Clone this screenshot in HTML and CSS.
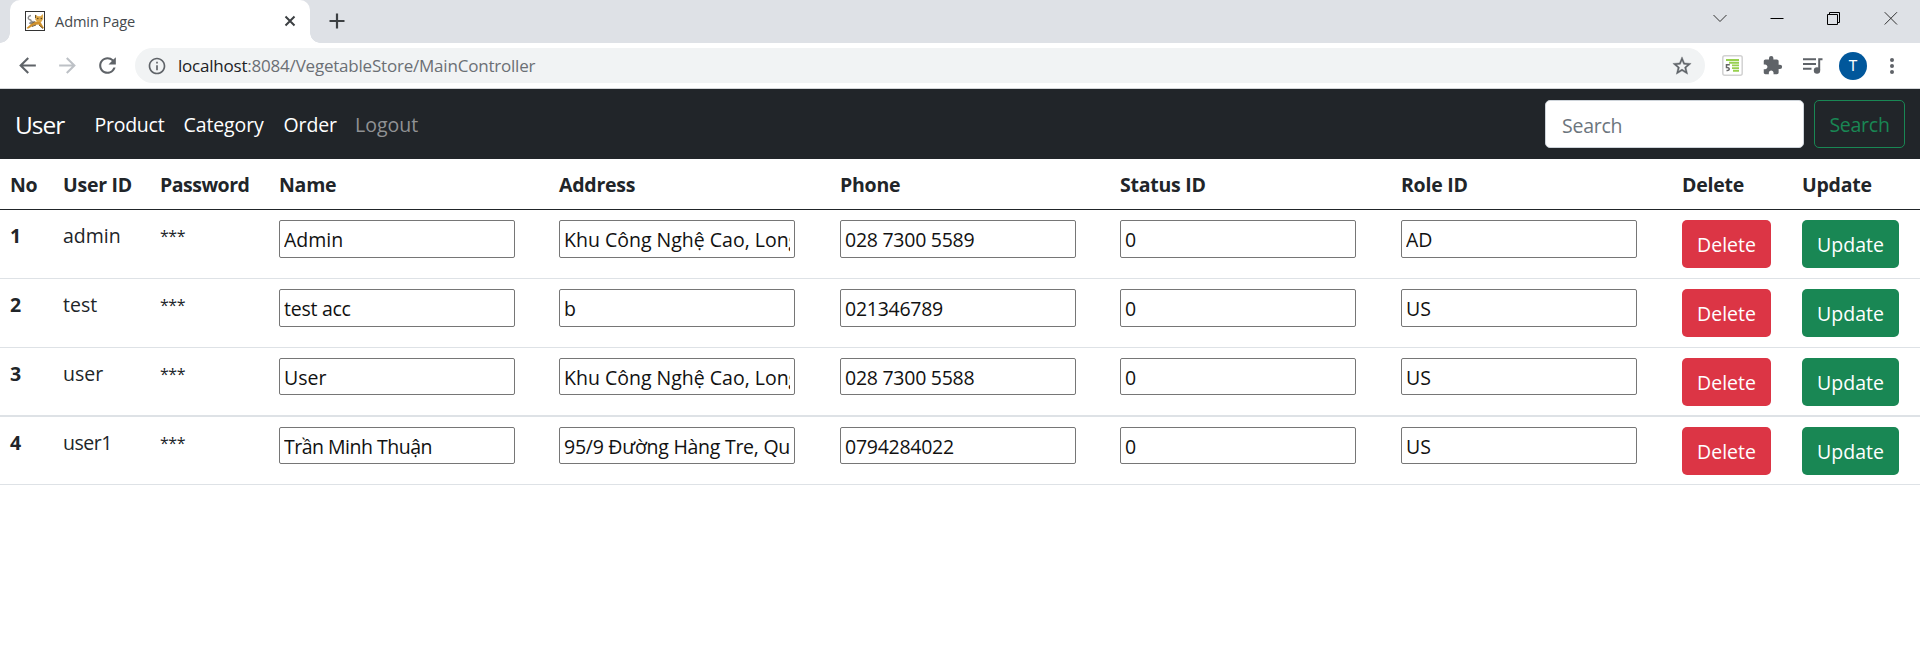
FILE: index.html
```
<!DOCTYPE html>
<html lang="vi">
<head>
<meta charset="utf-8">
<title>Admin Page</title>
<link rel="stylesheet" href="styles.css">
</head>
<body>
<header class="browser">
  <div class="tabstrip">
    <div class="tab">
      <svg class="favicon" width="20" height="20" viewBox="0 0 20 20">
        <rect x=".5" y=".5" width="19" height="19" fill="#fff" stroke="#333"/>
        <path d="M6 4.500C2.800 5 2.500 8 4.500 8.500S7.500 11 4 12.500M5 13l3.500-3" fill="none" stroke="#8d8d8d" stroke-width="1.300"/>
        <path d="M1.500 17l4.500-4 4.500-2.500 5 .5 3.500 6-1.500.5-4-4-4 .5-3.500 2L3 17.800z" fill="#d0912c"/>
        <path d="M10.500 3.500l2.300 1.800h2.700l2.500-2.300.2 5-2 3h-4l-2-2.500z" fill="#dda849"/>
        <path d="M6.500 12.500l3.500-2M10.500 4v3M14 14l4 3.500M7 15.500l4-1.500" stroke="#4a381d" stroke-width=".8"/>
        <circle cx="12.800" cy="7.500" r=".7" fill="#55431f"/><circle cx="16.300" cy="7.500" r=".7" fill="#55431f"/>
      </svg>
      <span class="tab-title">Admin Page</span>
      <svg class="tab-close" width="12" height="12" viewBox="0 0 12 12"><path d="M1.500 1.500l9 9M10.500 1.500l-9 9" stroke="#3c4043" stroke-width="2"/></svg>
    </div>
    <svg class="new-tab" width="16" height="16" viewBox="0 0 16 16"><path d="M8 .5v15M.5 8h15" stroke="#3c4043" stroke-width="2.200"/></svg>
    <div class="window-buttons">
      <svg width="14" height="14" viewBox="0 0 14 14"><path d="M.5 4L7 10.500 13.500 4" fill="none" stroke="#333" stroke-width="1"/></svg>
      <svg width="14" height="14" viewBox="0 0 14 14"><path d="M.5 7.500h13" stroke="#000"/></svg>
      <svg width="14" height="14" viewBox="0 0 14 14"><path d="M.5 3.500h10v10H.5zM2.500 3.500v-2h10v10h-2" fill="none" stroke="#000" stroke-width="1"/></svg>
      <svg width="14" height="14" viewBox="0 0 14 14"><path d="M.7 1.200l12.300 12.300M13 1.200L.7 13.500" stroke="#333" stroke-width="1"/></svg>
    </div>
  </div>
  <div class="toolbar">
    <svg class="nav-icon" width="25" height="25" viewBox="0 0 24 24"><path fill="#5f6368" d="M20 11H7.830l5.590-5.590L12 4l-8 8 8 8 1.410-1.410L7.830 13H20v-2z"/></svg>
    <svg class="nav-icon" width="25" height="25" viewBox="0 0 24 24"><path fill="#bdc1c6" d="M12 4l-1.410 1.410L16.170 11H4v2h12.170l-5.580 5.590L12 20l8-8z"/></svg>
    <svg class="nav-icon" width="25" height="25" viewBox="0 0 24 24"><path fill="#5f6368" d="M17.650 6.350A7.958 7.958 0 0 0 12 4c-4.420 0-7.990 3.580-7.990 8s3.570 8 7.990 8c3.730 0 6.840-2.550 7.730-6h-2.080A5.990 5.990 0 0 1 12 18c-3.310 0-6-2.690-6-6s2.690-6 6-6c1.660 0 3.140.69 4.220 1.780L13 11h7V4l-2.350 2.350z"/></svg>
    <div class="omnibox">
      <svg width="20" height="20" viewBox="0 0 24 24"><path fill="#5f6368" d="M11 7h2v2h-2zm0 4h2v6h-2zm1-9C6.480 2 2 6.480 2 12s4.480 10 10 10 10-4.480 10-10S17.520 2 12 2zm0 18c-4.410 0-8-3.590-8-8s3.590-8 8-8 8 3.590 8 8-3.590 8-8 8z"/></svg>
      <span class="url"><span class="host">localhost</span>:8084/VegetableStore/MainController</span>
      <svg width="22" height="22" viewBox="0 0 24 24"><path fill="#5f6368" stroke="#5f6368" stroke-width=".4" d="M22 9.240l-7.190-.62L12 2 9.190 8.630 2 9.240l5.460 4.730L5.820 21 12 17.270 18.180 21l-1.630-7.030L22 9.240zM12 15.400l-3.760 2.270 1-4.280-3.320-2.880 4.380-.38L12 6.100l1.710 4.040 4.380.38-3.320 2.880 1 4.280L12 15.400z"/></svg>
    </div>
    <div class="extensions">
      <svg width="21" height="21" viewBox="0 0 21 21">
        <rect x=".8" y=".8" width="19.400" height="19.400" rx="2" fill="#fff" stroke="#d2d2d2" stroke-width="1.500"/>
        <path d="M4 5h13M7 7.700h10M10 10.400h7M10 13.100h7M11 15.800h6" stroke="#97d04e" stroke-width="1.900"/>
        <path d="M7.800 9.800H4.500v2.700c3.500-.5 3.800 3.500 0 3" fill="none" stroke="#666" stroke-width="1.500"/>
      </svg>
      <svg class="puzzle" width="21" height="21" viewBox="0 0 24 24"><path fill="#5f6368" d="M20.500 11H19V7c0-1.100-.9-2-2-2h-4V3.500a2.500 2.500 0 0 0-5 0V5H4c-1.100 0-1.990.9-1.990 2v3.800H3.500c1.490 0 2.700 1.210 2.700 2.700s-1.210 2.700-2.700 2.700H2V20c0 1.100.9 2 2 2h3.800v-1.500c0-1.490 1.210-2.700 2.700-2.700s2.700 1.210 2.700 2.700V22H17c1.100 0 2-.9 2-2v-4h1.500a2.500 2.500 0 0 0 0-5z"/></svg>
      <svg class="playlist" width="20" height="18" viewBox="0 0 20 18"><path d="M0 2.200h13M0 7h13M0 11.800h8.500" stroke="#5f6368" stroke-width="1.900"/><path d="M19.500 2.200h-3.300V13" fill="none" stroke="#5f6368" stroke-width="2"/><circle cx="14" cy="13.500" r="3.200" fill="#5f6368"/></svg>
      <span class="avatar">T</span>
      <svg class="dots" width="6" height="18" viewBox="0 0 6 18"><g fill="#5f6368"><circle cx="3" cy="3" r="2"/><circle cx="3" cy="9" r="2"/><circle cx="3" cy="15" r="2"/></g></svg>
    </div>
  </div>
</header>

<nav class="navbar">
  <a class="brand">User</a>
  <a class="link product">Product</a>
  <a class="link category">Category</a>
  <a class="link order">Order</a>
  <a class="link logout">Logout</a>
  <form class="search">
    <input class="search-input" placeholder="Search">
    <button class="btn btn-outline" type="button">Search</button>
  </form>
</nav>

<table class="users">
  <colgroup><col class="c-no"><col class="c-id"><col class="c-pass"><col class="c-name"><col class="c-address"><col class="c-phone"><col class="c-status"><col class="c-role"><col class="c-delete"><col class="c-update"></colgroup>
  <thead>
    <tr><th>No</th><th>User ID</th><th class="tight">Password</th><th>Name</th><th>Address</th><th>Phone</th><th>Status ID</th><th>Role ID</th><th>Delete</th><th>Update</th></tr>
  </thead>
  <tbody>
    <tr><th>1</th><td>admin</td><td class="stars">***</td><td class="edit"><input class="field" value="Admin"></td><td class="edit"><input class="field" value="Khu Công Nghệ Cao, Long Thạnh Mỹ"></td><td class="edit"><input class="field num" value="028 7300 5589"></td><td class="edit"><input class="field" value="0"></td><td class="edit"><input class="field" value="AD"></td><td class="edit"><button class="btn btn-danger">Delete</button></td><td class="edit"><button class="btn btn-success">Update</button></td></tr>
    <tr><th>2</th><td>test</td><td class="stars">***</td><td class="edit"><input class="field num" value="test acc"></td><td class="edit"><input class="field" value="b"></td><td class="edit"><input class="field num" value="021346789"></td><td class="edit"><input class="field" value="0"></td><td class="edit"><input class="field" value="US"></td><td class="edit"><button class="btn btn-danger">Delete</button></td><td class="edit"><button class="btn btn-success">Update</button></td></tr>
    <tr class="thick"><th>3</th><td>user</td><td class="stars">***</td><td class="edit"><input class="field short" value="User"></td><td class="edit"><input class="field short" value="Khu Công Nghệ Cao, Long Thạnh Mỹ"></td><td class="edit"><input class="field short num" value="028 7300 5588"></td><td class="edit"><input class="field short" value="0"></td><td class="edit"><input class="field short" value="US"></td><td class="edit"><button class="btn btn-danger">Delete</button></td><td class="edit"><button class="btn btn-success">Update</button></td></tr>
    <tr class="last"><th>4</th><td class="tight">user1</td><td class="stars">***</td><td class="edit"><input class="field short tight" value="Trần Minh Thuận"></td><td class="edit"><input class="field short num" value="95/9 Đường Hàng Tre, Quận 9"></td><td class="edit"><input class="field short num" value="0794284022"></td><td class="edit"><input class="field short" value="0"></td><td class="edit"><input class="field short" value="US"></td><td class="edit"><button class="btn btn-danger">Delete</button></td><td class="edit"><button class="btn btn-success">Update</button></td></tr>
  </tbody>
</table>
</body>
</html>
```
FILE: styles.css
```
* { box-sizing: border-box; }
body {
  margin: 0;
  height: 655px;
  overflow: hidden;
  background: #fff;
  color: #212529;
  font: 19.5px/30px "Open Sans", "Noto Sans", sans-serif;
}
svg { display: block; flex: none; }
input, button { font: inherit; letter-spacing: inherit; margin: 0; }

/* browser frame */
.browser { height: 89px; background: #fff; border-bottom: 1px solid #d3d5d8; }
.tabstrip { display: flex; align-items: flex-start; height: 43px; background: #dee1e6; }
.tab {
  position: relative;
  display: flex;
  align-items: center;
  width: 300px;
  height: 43px;
  margin-left: 10px;
  padding: 0 14px 1px 15px;
  border-radius: 10px 10px 0 0;
  background: #fff;
}
.tab::before, .tab::after {
  content: "";
  position: absolute;
  bottom: 0;
  width: 10px;
  height: 10px;
}
.tab::before { left: -10px; background: radial-gradient(circle at 0 0, #dee1e6 9.5px, #fff 10px); }
.tab::after { right: -10px; background: radial-gradient(circle at 100% 0, #dee1e6 9.5px, #fff 10px); }
.tab-title { flex: 1; margin-left: 10px; font-size: 14.6px; line-height: 20px; letter-spacing: -.1px; color: #45494d; }
.new-tab { margin: 13px 0 0 19px; }
.window-buttons { display: flex; gap: 43px; margin: 11px 22px 0 auto; }
.toolbar { display: flex; align-items: center; height: 45px; padding: 0 24px 0 15px; }
.nav-icon { margin-right: 15px; }
.omnibox {
  display: flex;
  align-items: center;
  width: 1570px;
  height: 35px;
  padding: 0 12px;
  border-radius: 18px;
  background: #f1f3f4;
}
.url { flex: 1; margin-left: 11px; padding-top: 1px; font-size: 17px; letter-spacing: -.21px; color: #6b6f74; }
.host { color: #202124; }
.extensions { display: flex; align-items: center; flex: 1; margin-left: 17px; }
.puzzle { margin-left: 19px; }
.playlist { margin-left: 20px; }
.avatar {
  width: 28px;
  height: 28px;
  margin-left: 16px;
  border-radius: 50%;
  background: #01579b;
  color: #fff;
  font: 15px/28px Roboto, sans-serif;
  text-align: center;
}
.dots { margin-left: 22px; }

/* site navigation */
.navbar { display: flex; align-items: center; height: 70px; padding: 0 15px; background: #212529; color: #fff; }
.brand { width: 79.500px; padding-top: 2px; font-size: 24.500px; letter-spacing: -1px; }
.link { padding-top: 2px; }
.product { width: 89px; letter-spacing: -.25px; }
.category { width: 100px; letter-spacing: -.1px; }
.order { width: 71.500px; letter-spacing: -.1px; }
.logout { color: #909294; }
.search { display: flex; gap: 10px; margin: 0 0 0 auto; letter-spacing: -.25px; }
.search-input {
  width: 259px;
  height: 48px;
  padding: 2px 15px 0 16px;
  border: 1px solid #ced4da;
  border-radius: 5px;
  background: #fff;
}
.search-input::placeholder { color: #6c757d; opacity: 1; }
.btn {
  display: block;
  height: 48px;
  padding: 2px 0 0;
  border: 1px solid transparent;
  border-radius: 5px;
  color: #fff;
  text-align: center;
}
.btn-outline { width: 91px; border-color: #198754; background: transparent; color: #198754; }
.btn-danger { width: 89px; background: #dc3545; }
.btn-success { width: 97px; background: #198754; }

/* user table */
.users { width: 1920px; table-layout: fixed; border-collapse: separate; border-spacing: 0; }
.c-no { width: 53px; }
.c-id { width: 97px; }
.c-pass { width: 119px; }
.c-name { width: 280px; }
.c-address { width: 281px; }
.c-phone { width: 280px; }
.c-status { width: 281px; }
.c-role { width: 281px; }
.c-delete { width: 120px; }
.c-update { width: 128px; }
.users th { font-weight: 700; text-align: left; letter-spacing: -.25px; }
.users th, .users td { padding: 0 0 0 10px; vertical-align: top; }
.users thead th { height: 51px; padding-top: 11px; border-bottom: 1px solid #212529; }
.users tbody th, .users tbody td { height: 69px; padding-top: 11px; border-bottom: 1px solid #dee2e6; }
.users tbody .edit { padding-top: 10px; }
.users .thick th, .users .thick td { border-bottom-width: 2px; }
.users .last th, .users .last td { height: 68px; }
.users .tight { letter-spacing: -.5px; }
.users .stars { font-size: 16px; letter-spacing: -.5px; }
.field {
  display: block;
  width: 236px;
  height: 38px;
  padding: 1px 4px 0;
  border: 1px solid #767676;
  border-radius: 2px;
  background: #fff;
  color: #111;
}
.short { height: 37px; }
.num { letter-spacing: -.26px; }
```
